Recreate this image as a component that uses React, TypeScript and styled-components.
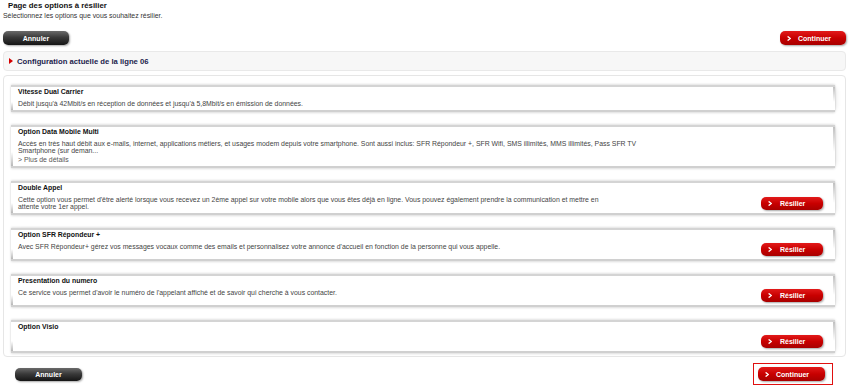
import { ReactElement } from "react";
import styled, { createGlobalStyle } from "styled-components";

const GlobalStyle = createGlobalStyle`
    html, body {
        margin: 0;
        padding: 0;
        background: #ffffff;
    }
    body {
        font-family: "Liberation Sans", Arial, sans-serif;
        font-size: 6.9px;
        color: #333333;
    }
`;

const Page = styled.div`
    width: 850px;
    padding: 0 4px 0 3px;
    box-sizing: border-box;
`;

const PageTitle = styled.div`
    font-weight: bold;
    font-size: 7.8px;
    color: #111111;
    line-height: 11px;
    padding-left: 5px;
`;

const Intro = styled.div`
    line-height: 10px;
    color: #333333;
`;

const Toolbar = styled.div`
    display: flex;
    justify-content: space-between;
    align-items: center;
    margin-top: 10px;
`;

const BaseButton = styled.button<{ $w?: number; $h?: number }>`
    display: flex;
    align-items: center;
    width: ${(p) => p.$w ?? 66}px;
    height: ${(p) => p.$h ?? 14}px;
    border: none;
    border-radius: 5px;
    padding: 0;
    font-family: "Liberation Sans", Arial, sans-serif;
    font-weight: bold;
    font-size: 7px;
    color: #ffffff;
    cursor: pointer;
    box-shadow: 1px 1px 2px rgba(0, 0, 0, 0.35);
`;

const DarkButton = styled(BaseButton)`
    justify-content: center;
    background: linear-gradient(to bottom, #6a6a6a 0%, #3a3a3a 45%, #151515 100%);
`;

const RedButton = styled(BaseButton)<{ $textGap?: number }>`
    padding-left: 7px;
    gap: ${(p) => p.$textGap ?? 7}px;
    background: linear-gradient(to bottom, #e21a1a 0%, #c80000 50%, #a80000 100%);
`;

const Chevron = (): ReactElement => (
    <svg width="4" height="5" viewBox="0 0 4 5">
        <path d="M0.6 0.4 L3.4 2.5 L0.6 4.6" fill="none" stroke="#ffffff" strokeWidth="1.3" />
    </svg>
);

const ConfigBar = styled.div`
    display: flex;
    align-items: center;
    gap: 4px;
    margin-top: 6px;
    height: 18px;
    padding-left: 5px;
    background: #f7f7f7;
    border: 1px solid #e9e9e9;
    border-radius: 4px;
    font-weight: bold;
    font-size: 7.7px;
    color: #1c1c4c;
`;

const RedTriangle = styled.span`
    width: 0;
    height: 0;
    border-top: 3.5px solid transparent;
    border-bottom: 3.5px solid transparent;
    border-left: 4px solid #d40000;
`;

const Panel = styled.div`
    display: flex;
    flex-direction: column;
    gap: 13px;
    margin-top: 4px;
    padding: 9px 10px 3px 7px;
    border: 1px solid #e6e6e6;
    border-radius: 4px;
`;

const Card = styled.div<{ $minH?: number }>`
    position: relative;
    display: flex;
    justify-content: space-between;
    min-height: ${(p) => p.$minH ?? 0}px;
    padding: 1px 12px 3px 7px;
    background: #ffffff;
    border-top: 2px solid #d4d4d4;
    border-bottom: 2px solid #d0d0d0;
    box-shadow: 0 -1px 2px rgba(0, 0, 0, 0.1), 0 1px 2px rgba(0, 0, 0, 0.12), 4px 0 5px -3px rgba(0, 0, 0, 0.1);

    &::before {
        content: "";
        position: absolute;
        left: 0;
        bottom: 0;
        width: 2px;
        height: 35%;
        background: linear-gradient(to bottom, rgba(190, 190, 190, 0), #b8b8b8);
    }

    &::after {
        content: "";
        position: absolute;
        right: 0;
        top: 0;
        width: 2px;
        height: 65%;
        background: linear-gradient(to bottom, #c0c0c0, rgba(196, 196, 196, 0));
    }
`;

const CardBody = styled.div`
    display: flex;
    flex-direction: column;
`;

const CardTitle = styled.div`
    font-weight: bold;
    color: #111111;
    line-height: 7px;
    margin-bottom: 5px;
`;

const Line = styled.div`
    line-height: 7px;
    white-space: nowrap;
    color: #444444;
`;

const MoreLink = styled.a`
    display: block;
    margin-top: 2px;
    line-height: 7px;
    color: #555555;
    text-decoration: none;
`;

const CardAction = styled.div`
    align-self: flex-end;
`;

const BottomBar = styled.div`
    display: flex;
    justify-content: space-between;
    align-items: center;
    margin-top: 6px;
    padding: 0 13px 0 12px;
`;

const Highlight = styled.div`
    padding: 3px 7px 3px 4px;
    border: 1px solid #e01010;
`;

type Option = {
    title: string;
    lines: string[];
    more?: boolean;
    cancellable: boolean;
};

const options: Option[] = [
    {
        title: "Vitesse Dual Carrier",
        lines: ["Débit jusqu'à 42Mbit/s en réception de données et jusqu'à 5,8Mbit/s en émission de données."],
        cancellable: false,
    },
    {
        title: "Option Data Mobile Multi",
        lines: [
            "Accès en très haut débit aux e-mails, internet, applications métiers, et usages modem depuis votre smartphone. Sont aussi inclus: SFR Répondeur +, SFR Wifi, SMS illimités, MMS illimités, Pass SFR TV",
            "Smartphone (sur deman...",
        ],
        more: true,
        cancellable: false,
    },
    {
        title: "Double Appel",
        lines: [
            "Cette option vous permet d'être alerté lorsque vous recevez un 2ème appel sur votre mobile alors que vous êtes déjà en ligne. Vous pouvez également prendre la communication et mettre en",
            "attente votre 1er appel.",
        ],
        cancellable: true,
    },
    {
        title: "Option SFR Répondeur +",
        lines: ["Avec SFR Répondeur+ gérez vos messages vocaux comme des emails et personnalisez votre annonce d'accueil en fonction de la personne qui vous appelle."],
        cancellable: true,
    },
    {
        title: "Presentation du numero",
        lines: ["Ce service vous permet d'avoir le numéro de l'appelant affiché et de savoir qui cherche à vous contacter."],
        cancellable: true,
    },
    {
        title: "Option Visio",
        lines: [],
        cancellable: true,
    },
];

const App = (): ReactElement => {
    return (
        <>
            <GlobalStyle />
            <Page>
                <PageTitle>Page des options à résilier</PageTitle>
                <Intro>Sélectionnez les options que vous souhaitez résilier.</Intro>

                <Toolbar>
                    <DarkButton>Annuler</DarkButton>
                    <RedButton><Chevron />Continuer</RedButton>
                </Toolbar>

                <ConfigBar>
                    <RedTriangle />
                    Configuration actuelle de la ligne 06
                </ConfigBar>

                <Panel>
                    {options.map((option) => (
                        <Card key={option.title} $minH={option.cancellable ? 25 : 0}>
                            <CardBody>
                                <CardTitle>{option.title}</CardTitle>
                                {option.lines.map((line) => (
                                    <Line key={line}>{line}</Line>
                                ))}
                                {option.more && <MoreLink href="#">&gt; Plus de détails</MoreLink>}
                            </CardBody>
                            {option.cancellable && (
                                <CardAction>
                                    <RedButton $w={62} $h={13} $textGap={8}><Chevron />Résilier</RedButton>
                                </CardAction>
                            )}
                        </Card>
                    ))}
                </Panel>

                <BottomBar>
                    <DarkButton $w={67} $h={13}>Annuler</DarkButton>
                    <Highlight>
                        <RedButton $w={67}><Chevron />Continuer</RedButton>
                    </Highlight>
                </BottomBar>
            </Page>
        </>
    );
};

export default App;
